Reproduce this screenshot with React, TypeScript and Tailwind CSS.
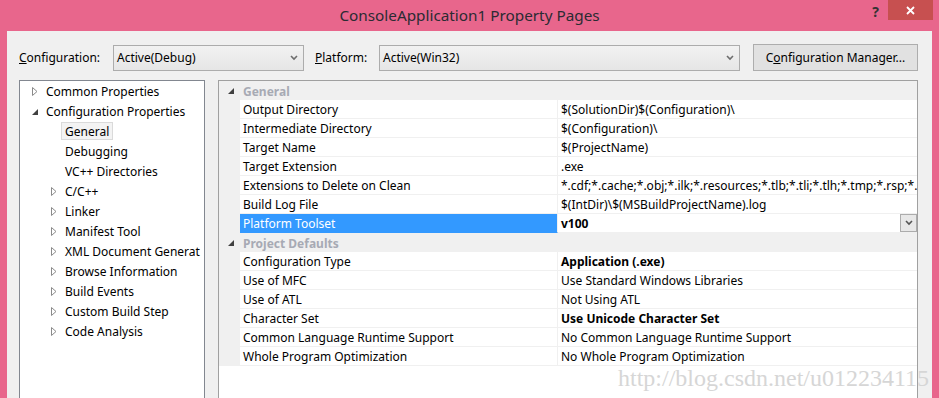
import React from 'react';

const font = { fontFamily: '"Noto Sans", "Open Sans", sans-serif' };

const treeItems: { label: string; level: number; arrow: 'open' | 'closed' | 'none'; selected?: boolean }[] = [
  { label: 'Common Properties', level: 0, arrow: 'closed' },
  { label: 'Configuration Properties', level: 0, arrow: 'open' },
  { label: 'General', level: 1, arrow: 'none', selected: true },
  { label: 'Debugging', level: 1, arrow: 'none' },
  { label: 'VC++ Directories', level: 1, arrow: 'none' },
  { label: 'C/C++', level: 1, arrow: 'closed' },
  { label: 'Linker', level: 1, arrow: 'closed' },
  { label: 'Manifest Tool', level: 1, arrow: 'closed' },
  { label: 'XML Document Generat', level: 1, arrow: 'closed' },
  { label: 'Browse Information', level: 1, arrow: 'closed' },
  { label: 'Build Events', level: 1, arrow: 'closed' },
  { label: 'Custom Build Step', level: 1, arrow: 'closed' },
  { label: 'Code Analysis', level: 1, arrow: 'closed' },
];

type Row = { name: string; value: string; bold?: boolean; active?: boolean };

const general: Row[] = [
  { name: 'Output Directory', value: '$(SolutionDir)$(Configuration)\\' },
  { name: 'Intermediate Directory', value: '$(Configuration)\\' },
  { name: 'Target Name', value: '$(ProjectName)' },
  { name: 'Target Extension', value: '.exe' },
  { name: 'Extensions to Delete on Clean', value: '*.cdf;*.cache;*.obj;*.ilk;*.resources;*.tlb;*.tli;*.tlh;*.tmp;*.rsp;*.pgc' },
  { name: 'Build Log File', value: '$(IntDir)\\$(MSBuildProjectName).log' },
  { name: 'Platform Toolset', value: 'v100', bold: true, active: true },
];

const defaults: Row[] = [
  { name: 'Configuration Type', value: 'Application (.exe)', bold: true },
  { name: 'Use of MFC', value: 'Use Standard Windows Libraries' },
  { name: 'Use of ATL', value: 'Not Using ATL' },
  { name: 'Character Set', value: 'Use Unicode Character Set', bold: true },
  { name: 'Common Language Runtime Support', value: 'No Common Language Runtime Support' },
  { name: 'Whole Program Optimization', value: 'No Whole Program Optimization' },
];

const Closed = () => (
  <svg width="6" height="9" viewBox="0 0 6 9" className="shrink-0">
    <path d="M0.5 0.5 L5 4.5 L0.5 8.5 Z" fill="none" stroke="#8a8a8a" strokeWidth="1" />
  </svg>
);

const Open = () => (
  <svg width="6" height="6" viewBox="0 0 6 6" className="shrink-0">
    <path d="M6 0 L6 6 L0 6 Z" fill="#404040" />
  </svg>
);

const Chevron = ({ color = '#6d6d6d' }: { color?: string }) => (
  <svg width="8" height="6" viewBox="0 0 8 6">
    <path d="M1 1 L4 4 L7 1" fill="none" stroke={color} strokeWidth="1.6" />
  </svg>
);

const Select = ({ value, width }: { value: string; width: string }) => (
  <div className={`${width} h-[26px] border border-[#acacac] bg-gradient-to-b from-[#f2f2f2] to-[#e6e6e6] flex items-center justify-between pl-[3px] pr-[5px] text-[12px] text-black`}>
    <span>{value}</span>
    <Chevron />
  </div>
);

const GridSection = ({ title, rows }: { title: string; rows: Row[] }) => (
  <>
    <div className="h-[19px] flex items-center bg-[#f0f0f0] pt-[2px]">
      <div className="w-[21px] flex justify-center pl-[2px] -mt-[1px]">
        <Open />
      </div>
      <span className="pl-[3px] font-bold text-[#a7aab4]">{title}</span>
    </div>
    {rows.map((r) => (
      <div key={r.name} className="h-[19px] flex">
        <div className="w-[21px] bg-[#f0f0f0] shrink-0" />
        <div
          className={`w-[318px] shrink-0 flex items-center pl-[3px] pt-[2px] border-b border-r border-[#f0f0f0] ${
            r.active ? 'bg-[#3399ff] text-white border-b-[#3399ff]' : 'bg-white text-black'
          }`}
        >
          {r.name}
        </div>
        <div className="flex-1 min-w-0 flex items-center justify-between pl-[3px] bg-white border-b border-[#f0f0f0] overflow-hidden">
          <span className={`whitespace-nowrap pt-[2px] ${r.bold ? 'font-bold' : ''}`}>{r.value}</span>
          {r.active && (
            <div className="w-[17px] h-[18px] shrink-0 border border-[#acacac] bg-[#e8e8e8] flex items-center justify-center">
              <Chevron color="#555" />
            </div>
          )}
        </div>
      </div>
    ))}
  </>
);

export default function App() {
  return (
    <div className="w-[939px] h-[398px] bg-[#e8668c] flex flex-col overflow-hidden relative" style={font}>
      <div className="h-[31px] shrink-0 flex items-start relative">
        <div className="flex-1 text-center text-[15.3px] text-[#2b2b33] pt-[4px]">ConsoleApplication1 Property Pages</div>
        <div className="absolute right-[60px] top-[1px] text-[14px] font-bold text-[#333]">?</div>
        <div className="absolute right-[6px] top-0 w-[45px] h-[20px] bg-[#c75050] flex items-center justify-center">
          <svg width="9" height="9" viewBox="0 0 9 9">
            <path d="M1 1 L8 8 M8 1 L1 8" stroke="white" strokeWidth="1.8" />
          </svg>
        </div>
      </div>
      <div className="flex-1 mx-[7px] bg-[#f0f0f0] flex flex-col pl-[12px] pr-[14px] pt-[13px] text-[12px] text-black min-h-0">
        <div className="h-[27px] flex items-center shrink-0">
          <span className="w-[94px]">
            <span className="underline">C</span>onfiguration:
          </span>
          <Select value="Active(Debug)" width="w-[191px]" />
          <span className="ml-[11px] w-[64px]">
            <span className="underline">P</span>latform:
          </span>
          <Select value="Active(Win32)" width="w-[361px]" />
          <div className="ml-[13px] w-[165px] h-[27px] border border-[#adadad] bg-[#e1e1e1] flex items-center justify-center">
            C<span className="underline">o</span>nfiguration Manager...
          </div>
        </div>
        <div className="flex gap-[13px] mt-[9px] flex-1 min-h-0">
          <div className="w-[186px] shrink-0 bg-white border border-[#828790] border-b-0 overflow-hidden">
            {treeItems.map((it) => (
              <div
                key={it.label}
                className="h-[20px] flex items-center whitespace-nowrap overflow-hidden pt-[2px]"
                style={{ paddingLeft: it.level === 0 ? 12 : 31 }}
              >
                <div className="w-[14px] shrink-0 flex items-center -mt-[1px]">
                  {it.arrow === 'closed' && <Closed />}
                  {it.arrow === 'open' && <Open />}
                </div>
                {it.selected ? (
                  <span className="-ml-[4px] -mt-[2px] px-[3px] h-[18px] pt-[1px] leading-[16px] bg-[#f3f3f3] border border-[#dadada]">
                    {it.label}
                  </span>
                ) : (
                  <span>{it.label}</span>
                )}
              </div>
            ))}
          </div>
          <div className="flex-1 bg-white border border-[#a0a0a0] border-b-0 overflow-hidden">
            <GridSection title="General" rows={general} />
            <GridSection title="Project Defaults" rows={defaults} />
          </div>
        </div>
      </div>
      <div
        className="absolute left-[618px] top-[360px] text-[24px] text-[#d6d6d6] whitespace-nowrap pointer-events-none"
        style={{ fontFamily: '"Liberation Serif", serif' }}
      >
        http://blog.csdn.net/u012234115
      </div>
    </div>
  );
}
